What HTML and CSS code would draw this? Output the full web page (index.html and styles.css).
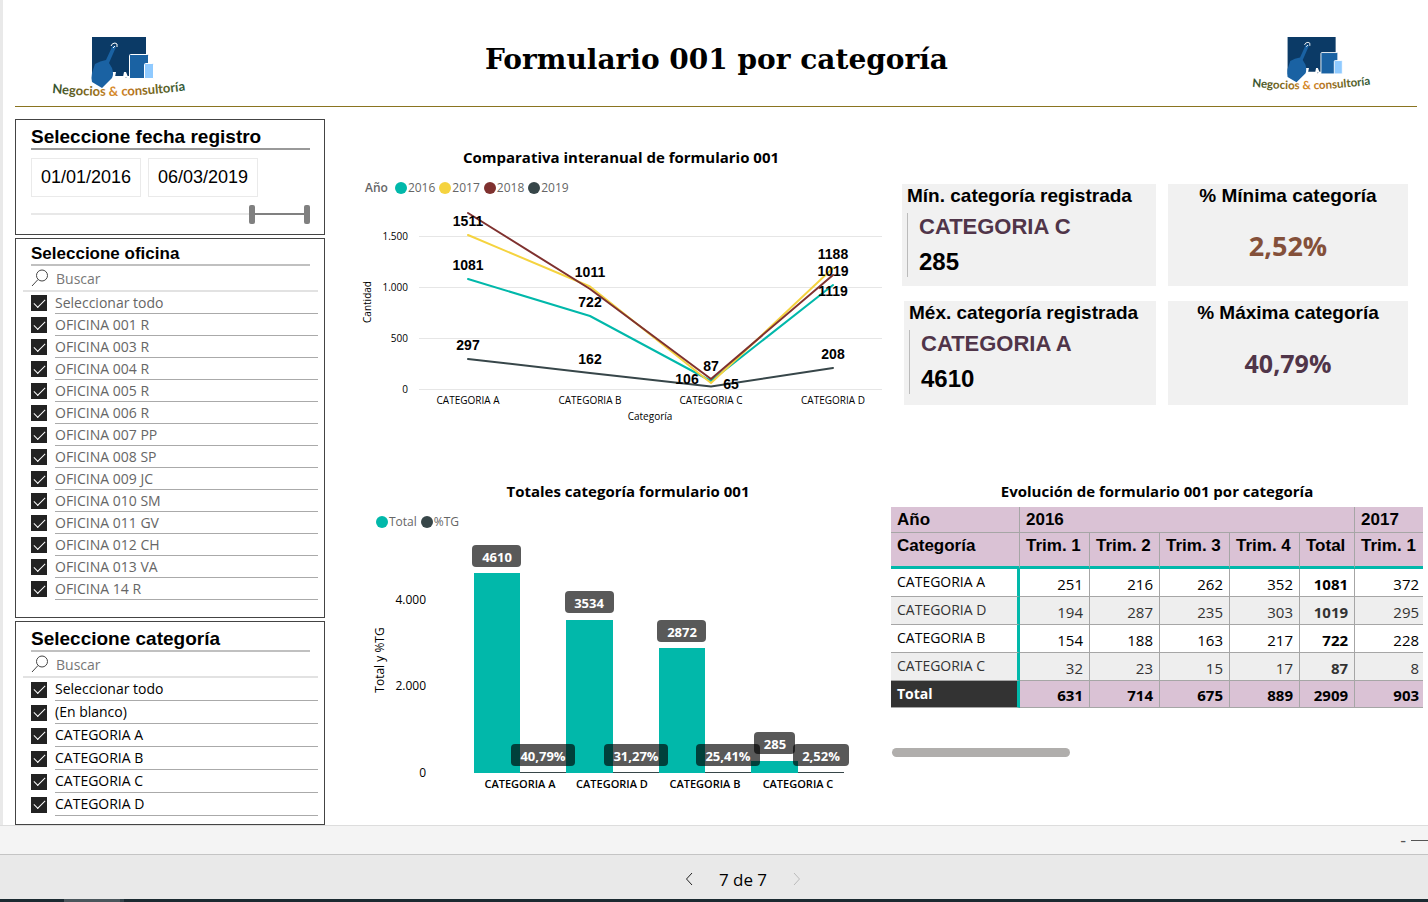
FILE: index.html
```html
<!DOCTYPE html>
<html lang="es">
<head>
<meta charset="utf-8">
<title>Formulario 001 por categoría</title>
<link rel="stylesheet" href="styles.css">
</head>
<body>
<svg class="defs" aria-hidden="true">
  <defs>
    <linearGradient id="logo-ink" x1="0" x2="1" y1="0" y2="0">
      <stop offset="0" stop-color="#2f5230"/>
      <stop offset="0.3" stop-color="#8a6a1c"/>
      <stop offset="0.46" stop-color="#d98a2b"/>
      <stop offset="0.6" stop-color="#b8741f"/>
      <stop offset="0.78" stop-color="#6b6420"/>
      <stop offset="1" stop-color="#2f5a3c"/>
    </linearGradient>
    <path id="logo-arc" d="M0 57 Q67 64 136 54"/>
    <symbol id="logo" viewBox="0 0 136 65">
      <path d="M40 1h54v39H82l-1 2-1-2H75l-1 2-1-2H40z" fill="#0b3a66"/>
      <path d="M60 36h4l-1 5h-5zM72 36h2l2 5h-5z" fill="#fff"/>
      <path d="M54 24L60 11Q62 8 64 11L57 27l3 5Q62 38 60 42L50 52 40 46Q39 42 40 37L43 28Q48 25 54 24z" fill="#1a62a3"/>
      <path d="M59 10q1-3 4-3t2 4M61 12l2-2" fill="none" stroke="#fff" stroke-width="1"/>
      <path d="M77.500 19.500q0-1 1-1h17q1 0 1 1v23h-19z" fill="#1a62a3" stroke="#fff" stroke-width="1"/>
      <path d="M92.500 28.500q0-1 1-1h7q1 0 1 1v14h-9z" fill="#8fcaff" stroke="#fff" stroke-width="1"/>
      <text class="logo-text" fill="url(#logo-ink)"><textPath href="#logo-arc">Negocios &amp; consultoría</textPath></text>
    </symbol>
  </defs>
</svg>

<div class="report">
  <header class="report-header">
    <svg class="logo" role="img" aria-label="Negocios y consultoría"><use href="#logo"/></svg>
    <h1>Formulario 001 por categoría</h1>
    <svg class="logo logo-small" role="img" aria-label="Negocios y consultoría"><use href="#logo"/></svg>
  </header>

  <div class="report-body">
    <aside class="filters">
      <section class="panel panel-date">
        <h2 class="panel-title">Seleccione fecha registro</h2>
        <div class="dates">
          <input class="date" type="text" value="01/01/2016" aria-label="Fecha inicial">
          <input class="date" type="text" value="06/03/2019" aria-label="Fecha final">
        </div>
        <div class="slider">
          <input class="range" type="range" min="0" max="100" value="80" aria-label="Inicio del periodo">
          <input class="range" type="range" min="0" max="100" value="100" aria-label="Fin del periodo">
        </div>
      </section>

      <section class="panel panel-office">
        <h2 class="panel-title compact">Seleccione oficina</h2>
        <div class="search">
          <svg class="search-icon" viewBox="0 0 18 18" aria-hidden="true"><circle cx="11" cy="6.500" r="5.500"/><path d="M7 10.500L1 17"/></svg>
          <input type="text" placeholder="Buscar" aria-label="Buscar oficina">
        </div>
        <ul class="options">
          <li><label><input type="checkbox" checked><span>Seleccionar todo</span></label></li>
          <li><label><input type="checkbox" checked><span>OFICINA 001 R</span></label></li>
          <li><label><input type="checkbox" checked><span>OFICINA 003 R</span></label></li>
          <li><label><input type="checkbox" checked><span>OFICINA 004 R</span></label></li>
          <li><label><input type="checkbox" checked><span>OFICINA 005 R</span></label></li>
          <li><label><input type="checkbox" checked><span>OFICINA 006 R</span></label></li>
          <li><label><input type="checkbox" checked><span>OFICINA 007 PP</span></label></li>
          <li><label><input type="checkbox" checked><span>OFICINA 008 SP</span></label></li>
          <li><label><input type="checkbox" checked><span>OFICINA 009 JC</span></label></li>
          <li><label><input type="checkbox" checked><span>OFICINA 010 SM</span></label></li>
          <li><label><input type="checkbox" checked><span>OFICINA 011 GV</span></label></li>
          <li><label><input type="checkbox" checked><span>OFICINA 012 CH</span></label></li>
          <li><label><input type="checkbox" checked><span>OFICINA 013 VA</span></label></li>
          <li><label><input type="checkbox" checked><span>OFICINA 14 R</span></label></li>
        </ul>
      </section>

      <section class="panel panel-category">
        <h2 class="panel-title">Seleccione categoría</h2>
        <div class="search">
          <svg class="search-icon" viewBox="0 0 18 18" aria-hidden="true"><circle cx="11" cy="6.500" r="5.500"/><path d="M7 10.500L1 17"/></svg>
          <input type="text" placeholder="Buscar" aria-label="Buscar categoría">
        </div>
        <ul class="options">
          <li><label><input type="checkbox" checked><span>Seleccionar todo</span></label></li>
          <li><label><input type="checkbox" checked><span>(En blanco)</span></label></li>
          <li><label><input type="checkbox" checked><span>CATEGORIA A</span></label></li>
          <li><label><input type="checkbox" checked><span>CATEGORIA B</span></label></li>
          <li><label><input type="checkbox" checked><span>CATEGORIA C</span></label></li>
          <li><label><input type="checkbox" checked><span>CATEGORIA D</span></label></li>
        </ul>
      </section>
    </aside>

    <main class="visuals">
      <section class="chart">
        <h2 class="chart-title">Comparativa interanual de formulario 001</h2>
        <div class="legend legend-years">
          <strong>Año</strong>
          <span class="key teal">2016</span><span class="key yellow">2017</span><span class="key maroon">2018</span><span class="key slate">2019</span>
        </div>
        <svg class="plot" viewBox="0 0 532 230" role="img" aria-label="Cantidad por categoría y año">
          <g class="gridlines">
            <path d="M64 36.500H527M64 87.500H527M64 138.500H527M64 189.500H527"/>
          </g>
          <g class="axis end">
            <text x="53" y="40">1.500</text><text x="53" y="91">1.000</text><text x="53" y="142">500</text><text x="53" y="193">0</text>
          </g>
          <g class="series">
            <path class="s-teal" d="M113 79L235 116L356 181L478 85"/>
            <path class="s-yellow" d="M113 35L235 86.500L356 183L478 68"/>
            <path class="s-maroon" d="M113 13L235 89L356 179L478 75"/>
            <path class="s-slate" d="M113 159L235 173L356 186.500L478 168"/>
          </g>
          <g class="values">
            <text x="113" y="26">1511</text><text x="113" y="70">1081</text><text x="113" y="150">297</text>
            <text x="235" y="77">1011</text><text x="235" y="107">722</text><text x="235" y="164">162</text>
            <text x="356" y="171">87</text><text x="332" y="184">106</text><text x="376" y="189">65</text>
            <text x="478" y="59">1188</text><text x="478" y="76">1019</text><text x="478" y="96">1119</text><text x="478" y="159">208</text>
          </g>
          <g class="axis">
            <text x="113" y="204">CATEGORIA A</text><text x="235" y="204">CATEGORIA B</text><text x="356" y="204">CATEGORIA C</text><text x="478" y="204">CATEGORIA D</text>
            <text x="295" y="220">Categoría</text>
            <text transform="translate(16 102) rotate(-90)">Cantidad</text>
          </g>
        </svg>
      </section>

      <section class="kpis">
        <article class="kpi">
          <h3>Mín. categoría registrada</h3>
          <div class="kpi-detail"><p class="kpi-name">CATEGORIA C</p><p class="kpi-value">285</p></div>
        </article>
        <article class="kpi kpi-percent">
          <h3>% Mínima categoría</h3>
          <p class="percent brown">2,52%</p>
        </article>
        <article class="kpi kpi-inset">
          <h3>Méx. categoría registrada</h3>
          <div class="kpi-detail"><p class="kpi-name">CATEGORIA A</p><p class="kpi-value">4610</p></div>
        </article>
        <article class="kpi kpi-percent">
          <h3>% Máxima categoría</h3>
          <p class="percent plum">40,79%</p>
        </article>
      </section>

      <section class="chart">
        <h2 class="chart-title shifted">Totales categoría formulario 001</h2>
        <div class="legend legend-totals">
          <span class="key teal">Total</span><span class="key slate">%TG</span>
        </div>
        <svg class="plot plot-totals" viewBox="0 0 532 262" role="img" aria-label="Total y porcentaje por categoría">
          <g class="axis large end">
            <text x="71" y="69">4.000</text><text x="71" y="155">2.000</text><text x="71" y="242">0</text>
          </g>
          <text class="axis large" transform="translate(29 125) rotate(-90)">Total y %TG</text>
          <path class="s-slate thin" d="M119 237.500H489"/>
          <path class="bars" d="M119 38h46v200h-46zM211 85h47v153h-47zM304 113h46v125h-46zM396 226h47v12h-47z"/>
          <g class="tags">
            <rect x="117" y="10" width="49" height="22" rx="4"/>
            <rect x="210" y="56" width="49" height="22" rx="4"/>
            <rect x="302" y="85" width="49" height="22" rx="4"/>
            <rect x="399" y="197" width="41" height="22" rx="4"/>
            <rect x="156" y="209" width="64" height="22" rx="4"/>
            <rect x="249" y="209" width="64" height="22" rx="4"/>
            <rect x="341" y="209" width="64" height="22" rx="4"/>
            <rect x="438" y="209" width="56" height="22" rx="4"/>
          </g>
          <g class="tag-text">
            <text x="142" y="27">4610</text><text x="234" y="73">3534</text><text x="327" y="102">2872</text><text x="420" y="214">285</text>
            <text x="188" y="226">40,79%</text><text x="281" y="226">31,27%</text><text x="373" y="226">25,41%</text><text x="466" y="226">2,52%</text>
          </g>
          <g class="axis strong">
            <text x="165" y="253">CATEGORIA A</text><text x="257" y="253">CATEGORIA D</text><text x="350" y="253">CATEGORIA B</text><text x="443" y="253">CATEGORIA C</text>
          </g>
        </svg>
      </section>

      <section class="chart">
        <h2 class="chart-title">Evolución de formulario 001 por categoría</h2>
        <table class="matrix">
          <colgroup><col class="c-name"><col class="c-quarter" span="4"><col class="c-total"><col class="c-last"></colgroup>
          <thead>
            <tr><th scope="col">Año</th><th scope="colgroup" colspan="5">2016</th><th scope="col">2017</th></tr>
            <tr class="quarters"><th scope="col">Categoría</th><th scope="col">Trim. 1</th><th scope="col">Trim. 2</th><th scope="col">Trim. 3</th><th scope="col">Trim. 4</th><th scope="col">Total</th><th scope="col">Trim. 1</th></tr>
          </thead>
          <tbody>
            <tr><th scope="row">CATEGORIA A</th><td>251</td><td>216</td><td>262</td><td>352</td><td class="sum">1081</td><td>372</td></tr>
            <tr><th scope="row">CATEGORIA D</th><td>194</td><td>287</td><td>235</td><td>303</td><td class="sum">1019</td><td>295</td></tr>
            <tr><th scope="row">CATEGORIA B</th><td>154</td><td>188</td><td>163</td><td>217</td><td class="sum">722</td><td>228</td></tr>
            <tr><th scope="row">CATEGORIA C</th><td>32</td><td>23</td><td>15</td><td>17</td><td class="sum">87</td><td>8</td></tr>
          </tbody>
          <tfoot>
            <tr><th scope="row">Total</th><td>631</td><td>714</td><td>675</td><td>889</td><td>2909</td><td>903</td></tr>
          </tfoot>
        </table>
        <div class="scroll-thumb"></div>
      </section>
    </main>
  </div>
</div>

<div class="zoom-bar"><button type="button" aria-label="Alejar">-</button><span class="zoom-track"></span></div>
<nav class="pager" aria-label="Páginas">
  <button type="button" aria-label="Página anterior"><svg viewBox="0 0 8 14"><path d="M7 1L1.500 7L7 13"/></svg></button>
  <span>7 de 7</span>
  <button type="button" aria-label="Página siguiente" disabled><svg viewBox="0 0 8 14"><path d="M1 1L6.500 7L1 13"/></svg></button>
</nav>
<div class="taskbar"><span></span></div>
</body>
</html>
```

FILE: styles.css
```css
* { box-sizing: border-box; }

body {
  margin: 0;
  background: #fff;
  color: #000;
  font-family: "Open Sans", "Noto Sans", sans-serif;
  font-size: 14px;
}

h1, h2, h3, p, ul { margin: 0; padding: 0; }
button { border: 0; padding: 0; background: none; font: inherit; color: inherit; }
input { font: inherit; }

.defs { position: absolute; width: 0; height: 0; }

.report {
  border-left: 3px solid #e9e9e9;
  padding: 0 5px 0 12px;
}

.report-header {
  display: flex;
  align-items: flex-start;
  justify-content: space-between;
  height: 107px;
  margin-right: 6px;
  padding: 36px 44px 0 37px;
  border-bottom: 1px solid #8a7420;
}
.report-header h1 {
  padding-right: 7px;
  font: bold 28px/48px "DejaVu Serif", serif;
}
.logo { width: 136px; height: 65px; }
.logo-small { width: 121px; height: 58px; }
.logo-text { font: bold 13px "Lato", sans-serif; }

.report-body { display: flex; gap: 30px; padding-top: 12px; }

.filters { display: flex; flex-direction: column; gap: 3px; width: 310px; flex: none; }
.panel { border: 1px solid #444; padding: 5px 6px 0 7px; }
.panel-date { height: 116px; }
.panel-office { height: 380px; }
.panel-category { height: 204px; }

.panel-title {
  margin: 0 8px;
  border-bottom: 2px solid #999;
  font: bold 19px/23px "Liberation Sans", Arial, sans-serif;
}
.panel-title.compact { font-size: 17px; line-height: 20px; }
.panel-office .panel-title, .panel-category .panel-title { border-color: #c0c0c0; }

.dates { display: flex; gap: 7px; margin: 8px 8px 0; }
.date {
  width: 110px;
  height: 39px;
  border: 1px solid #eaeaea;
  padding: 0;
  text-align: center;
  font: 18px "Liberation Sans", Arial, sans-serif;
}

.slider {
  position: relative;
  height: 20px;
  margin: 7px 8px 0;
  background: linear-gradient(#808080, #808080) right center / 56px 2px no-repeat,
    linear-gradient(#e8e8e8, #e8e8e8) center / 100% 2px no-repeat;
}
.range {
  position: absolute;
  inset: 0;
  width: 100%;
  margin: 0;
  appearance: none;
  background: none;
  pointer-events: none;
}
.range::-webkit-slider-thumb {
  appearance: none;
  width: 6px;
  height: 19px;
  border-radius: 2px;
  background: #808080;
  pointer-events: auto;
}

.search {
  display: flex;
  align-items: center;
  gap: 7px;
  height: 26px;
  padding-left: 8px;
  border-bottom: 2px solid #e2e2e2;
}
.search input { width: 200px; border: 0; padding: 0; outline: 0; background: none; }
.search input::placeholder { color: #777; }
.search-icon { width: 18px; height: 18px; fill: none; stroke: #444; }

.options { list-style: none; color: #666; }
.options label { display: flex; align-items: center; gap: 8px; height: 22px; padding-left: 8px; }
.options span { flex: 1; height: 22px; line-height: 21px; border-bottom: 1px solid #aaa; }
.panel-category .options { color: #000; }
.panel-category .options label, .panel-category .options span { height: 23px; }
.options input {
  display: grid;
  place-items: center;
  width: 16px;
  height: 16px;
  margin: 0;
  appearance: none;
  background: #222;
}
.options input:checked::before {
  content: "";
  width: 10px;
  height: 5px;
  margin-bottom: 3px;
  border: solid #fff;
  border-width: 0 0 1px 1px;
  transform: rotate(-45deg);
}

.visuals {
  display: grid;
  flex: 1;
  grid-template-columns: 1fr 1fr;
  align-content: start;
  column-gap: 4px;
  row-gap: 49px;
  padding-top: 26px;
}
.chart { min-width: 0; }
.chart-title { font-size: 15px; line-height: 24px; font-weight: 700; text-align: center; }
.chart-title.shifted { padding-left: 14px; }

.legend {
  display: flex;
  gap: 4px;
  margin-top: 9px;
  padding-left: 10px;
  color: #666;
  font-size: 12px;
  line-height: 20px;
}
.legend strong { margin-right: 3px; font-weight: 600; }
.legend-totals { padding-left: 21px; }
.key { display: flex; align-items: center; gap: 1px; }
.key::before { content: ""; width: 12px; height: 12px; border-radius: 50%; background: currentColor; }
.teal::before { background: #01b8aa; }
.yellow::before { background: #f5d33f; }
.maroon::before { background: #7f312f; }
.slate::before { background: #374649; }

.plot { display: block; width: 100%; margin-top: 2px; }
.plot-totals { margin-top: 3px; }
.gridlines path { stroke: #e6e6e6; }
.axis { font-size: 10px; text-anchor: middle; }
.large { font-size: 12px; }
.strong { font-size: 11px; font-weight: 600; }
.end { text-anchor: end; }
.series path { fill: none; stroke-width: 2; stroke-linejoin: round; stroke-linecap: round; }
.s-teal { stroke: #01b8aa; }
.s-yellow { stroke: #f5d33f; }
.s-maroon { stroke: #7f312f; }
.s-slate { stroke: #374649; }
.thin { stroke-width: 1; }
.values { font: bold 14px "Liberation Sans", Arial, sans-serif; text-anchor: middle; }
.bars { fill: #01b8aa; }
.tags { fill: #000; fill-opacity: 0.65; }
.tag-text { fill: #fff; font-size: 13px; font-weight: 700; text-anchor: middle; }

.kpis {
  display: grid;
  grid-template-columns: 254fr 240fr;
  grid-template-rows: 102px 104px;
  align-content: start;
  gap: 15px 12px;
  padding: 39px 15px 0 11px;
}
.kpi { padding: 0 5px; background: #f1f1f1; font-family: "Liberation Sans", Arial, sans-serif; }
.kpi-inset { margin-left: 2px; }
.kpi h3 { font-size: 19px; line-height: 24px; white-space: nowrap; }
.kpi-detail { margin-top: 5px; padding-left: 11px; border-left: 1px solid #bbb; font-weight: bold; }
.kpi-name { color: #503549; font-size: 22px; line-height: 28px; }
.kpi-value { padding-top: 6px; font-size: 24px; line-height: 30px; }
.kpi-percent { text-align: center; }
.percent { margin-top: 19px; font-family: "Open Sans", sans-serif; font-weight: 700; line-height: 38px; }
.brown { color: #84503a; font-size: 27px; }
.plum { color: #503549; font-size: 25px; }

.matrix {
  width: 100%;
  margin-top: 4px;
  table-layout: fixed;
  border-collapse: separate;
  border-spacing: 0;
  font-size: 15px;
  line-height: 20px;
}
.c-name { width: 129px; }
.c-quarter { width: 70px; }
.c-total { width: 55px; }
.c-last { width: 68px; }
.matrix th, .matrix td {
  height: 28px;
  padding: 0 6px;
  border-right: 1px solid #a6a6a6;
  border-bottom: 1px solid #a6a6a6;
  vertical-align: middle;
}
.matrix th { text-align: left; }
.matrix tbody th { padding-bottom: 1px; }
.matrix td { padding-top: 2px; text-align: right; }
.matrix tr > :last-child { padding-right: 4px; border-right: 0; }
.matrix thead th {
  height: 26px;
  background: #dac2d5;
  font: bold 17px/20px "Liberation Sans", Arial, sans-serif;
  white-space: nowrap;
}
.matrix .quarters th { height: 36px; padding-top: 3px; border-bottom: 3px solid #01b8aa; vertical-align: top; }
.matrix tbody th { border-right: 3px solid #01b8aa; font-weight: 400; font-size: 14px; }
.matrix tbody tr:nth-child(even) { background: #eee; color: #333; }
.matrix .sum { font-weight: 700; }
.matrix tfoot { background: #dac2d5; font-weight: 700; }
.matrix tfoot th, .matrix tfoot td { height: 27px; }
.matrix tfoot th { border-right: 3px solid #01b8aa; background: #333; color: #fff; font-size: 14px; }

.scroll-thumb { width: 178px; height: 9px; margin: 40px 0 0 1px; border-radius: 5px; background: #b0aeac; }

.zoom-bar {
  display: flex;
  align-items: center;
  justify-content: flex-end;
  gap: 5px;
  height: 29px;
  border-top: 1px solid #ddd;
  background: #f4f4f4;
  color: #555;
  font-size: 18px;
  line-height: 28px;
}
.zoom-track { width: 17px; height: 1px; background: #555; }

.pager {
  display: flex;
  align-items: center;
  justify-content: center;
  gap: 26px;
  height: 45px;
  padding: 4px 0 0 58px;
  border-top: 1px solid #c4c4c4;
  background: #e9e9e9;
  font-size: 17px;
}
.pager button { display: flex; }
.pager svg { width: 8px; height: 14px; fill: none; stroke: #222; }
.pager button:disabled svg { stroke: #bbb; }

.taskbar { height: 3px; padding-left: 64px; background: #1b2a31; }
.taskbar span { display: block; width: 60px; height: 3px; border-right: 4px solid #34434a; background: #4a565c; }
```
